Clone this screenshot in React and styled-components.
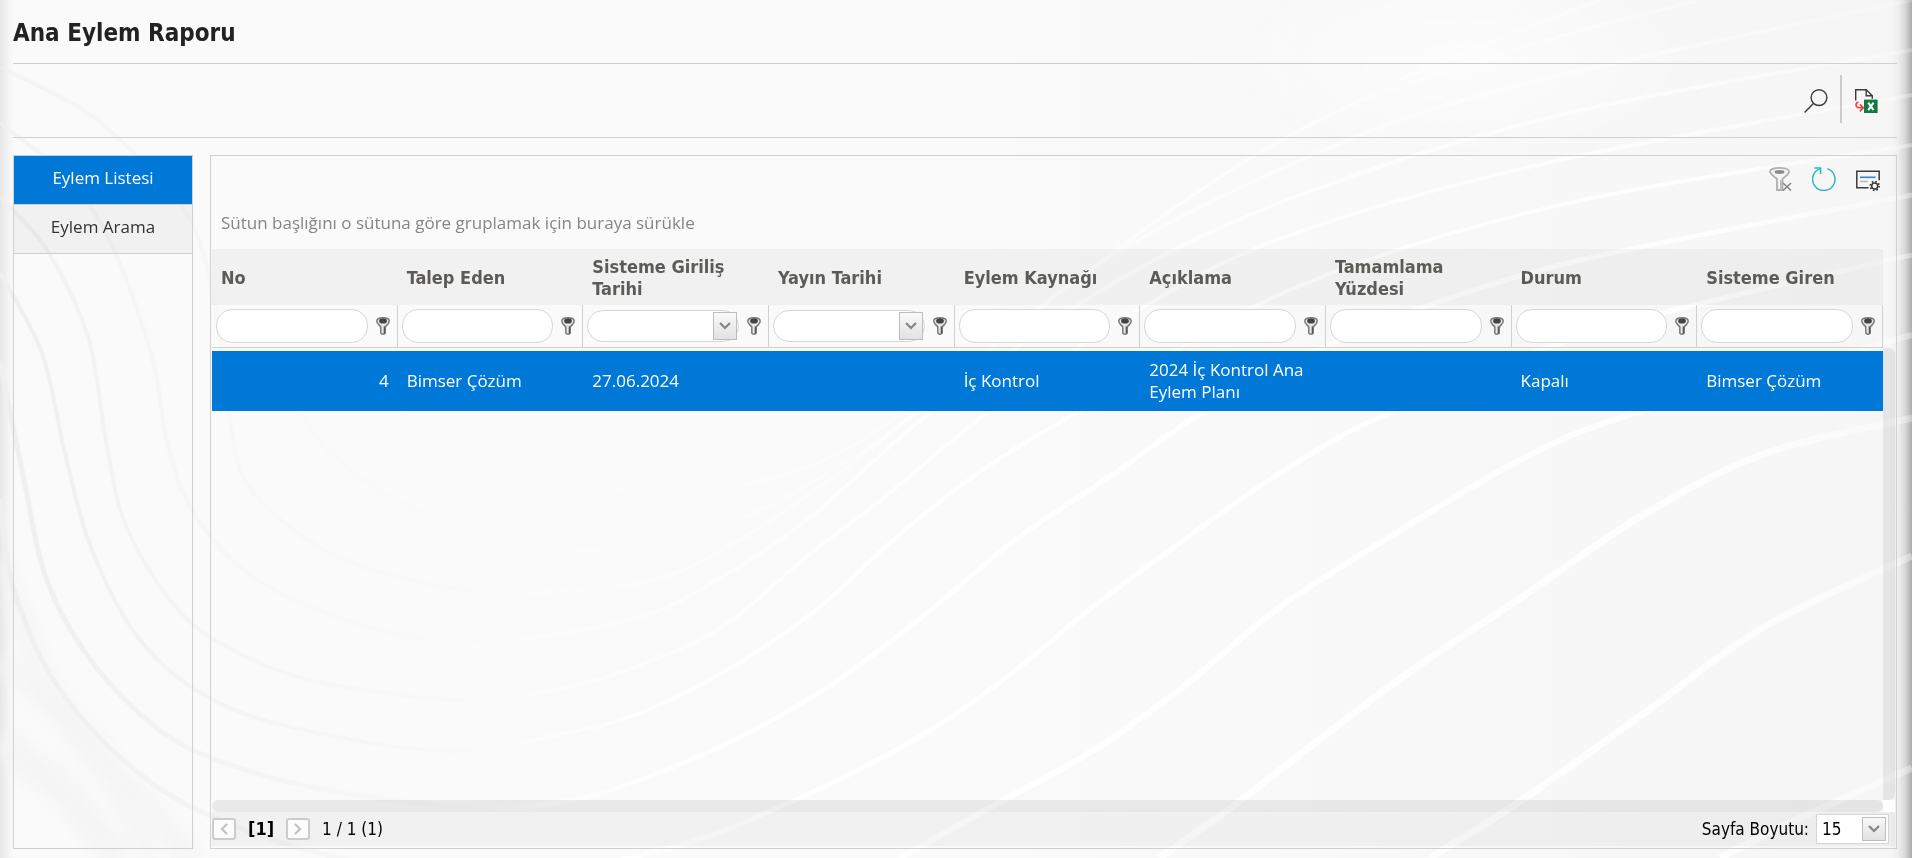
import React from 'react'
import styled, { createGlobalStyle } from 'styled-components';

const textFont = "'Open Sans', sans-serif";
const boldFont = "'DejaVu Sans Condensed', 'DejaVu Sans', sans-serif";
const blue = '#0078d7';
const line = '#d0d0d0';

const GlobalStyle = createGlobalStyle`
  * {
    box-sizing: border-box;
  }
  body {
    margin: 0;
    background:
      linear-gradient(to right, rgba(0, 0, 0, 0.08), rgba(0, 0, 0, 0.03) 7px, transparent 14px),
      linear-gradient(to left, rgba(0, 0, 0, 0.3), rgba(0, 0, 0, 0.12) 7px, rgba(0, 0, 0, 0.03) 14px, transparent 22px),
      linear-gradient(to right, #fafafa 50%, #f6f6f6);
    color: #000;
    font-family: ${textFont};
    font-size: 17px;
    line-height: 22px;
  }
  button, input, select {
    margin: 0;
    padding: 0;
    font: inherit;
    color: inherit;
  }
`;

const Backdrop = styled.svg`
  position: fixed;
  inset: 0;
  z-index: -1;
  width: 100%;
  height: 100%;
`;

const Page = styled.main`
  display: flex;
  flex-direction: column;
  min-height: 100vh;
  padding: 0 15px 9px 13px;
`;

const Title = styled.h1`
  margin: 0;
  padding: 19px 0 16px;
  border-bottom: 1px solid ${line};
  color: #222;
  font-family: ${boldFont};
  font-size: 24px;
  line-height: 28px;
`;

const Toolbar = styled.div`
  display: flex;
  align-items: center;
  justify-content: flex-end;
  gap: 12px;
  height: 74px;
  padding-right: 19px;
  border-bottom: 1px solid ${line};
`;

const Separator = styled.div`
  align-self: flex-start;
  width: 2px;
  height: 48px;
  margin-top: 11px;
  background: #ccc;
`;

const IconButton = styled.button`
  display: flex;
  border: 0;
  background: none;
  cursor: pointer;
`;

const Content = styled.div`
  display: flex;
  flex: 1;
  gap: 17px;
  padding-top: 17px;
`;

const Sidebar = styled.nav`
  width: 180px;
  border: 1px solid ${line};
`;

const Tab = styled.a`
  display: flex;
  align-items: center;
  justify-content: center;
  height: 49px;
  padding-bottom: 5px;
  border-bottom: 1px solid ${line};
  background: ${p => p.$active ? blue : 'rgba(0, 0, 0, 0.035)'};
  background-clip: padding-box;
  color: ${p => p.$active ? '#fff' : '#333'};
  text-decoration: none;
`;

const Panel = styled.section`
  display: flex;
  flex: 1;
  flex-direction: column;
  min-width: 0;
  padding: 0 1px 2px;
  border: 1px solid ${line};
`;

const GridTools = styled.div`
  display: flex;
  align-items: center;
  justify-content: flex-end;
  gap: 20px;
  height: 46px;
  padding-right: 15px;
`;

const GroupHint = styled.div`
  padding: 10px 9px 15px;
  color: #858585;
`;

const GridBody = styled.div`
  display: flex;
  flex: 1;
`;

const TableArea = styled.div`
  flex: 1;
`;

const Table = styled.table`
  width: 100%;
  border-collapse: separate;
  border-spacing: 0;
  table-layout: fixed;
`;

const HeadCell = styled.th`
  height: 56px;
  padding: 1px 9px 0;
  background: rgba(0, 0, 0, 0.035);
  color: #5c5b57;
  font-family: ${boldFont};
  font-size: 18px;
  text-align: left;
`;

const FilterCell = styled.td`
  height: 43px;
  padding: 0;
  border-right: 1px solid ${line};
  border-bottom: 1px solid ${line};
`;

const FilterBox = styled.div`
  display: flex;
  align-items: center;
  gap: 8px;
  padding: 0 7px 0 4px;
`;

const FilterInput = styled.input`
  flex: 1;
  width: 100%;
  min-width: 0;
  height: 34px;
  padding: 0 12px;
  border: 1px solid #d6d6d6;
  border-radius: 16px;
  background: #fff;
`;

const DateBox = styled.div`
  display: flex;
  flex: 1;
  align-items: center;
  min-width: 0;
  height: 32px;
  padding-right: 1px;
  border: 1px solid #d6d6d6;
  border-radius: 16px;
  background: #fff;
`;

const DateInput = styled.input`
  flex: 1;
  width: 100%;
  min-width: 0;
  padding-left: 12px;
  border: 0;
  background: none;
`;

const DropButton = styled.button`
  display: flex;
  align-items: center;
  justify-content: center;
  width: 24px;
  height: 28px;
  border: 1px solid #bdbdbd;
  background: linear-gradient(#f9f9f9, #e2e2e2);
`;

const Rows = styled.tbody`
  &::before {
    content: '';
    display: block;
    height: 3px;
  }
`;

const Cell = styled.td`
  height: 60px;
  padding: 0 9px;
  background: ${blue};
  color: #fff;
  text-align: ${p => p.$right ? 'right' : 'left'};
`;

const VerticalScroll = styled.div`
  width: 12px;
  margin-top: 99px;
  border-radius: 0 6px 6px 0;
  background: rgba(0, 0, 0, 0.065);
`;

const ScrollRow = styled.div`
  background: linear-gradient(#fff, #fff) right / 12px 100% no-repeat;
`;

const HorizontalScroll = styled.div`
  height: 12px;
  margin-right: 12px;
  border-radius: 6px;
  background: rgba(0, 0, 0, 0.065);
`;

const Pager = styled.footer`
  display: flex;
  align-items: center;
  gap: 12px;
  height: 34px;
  padding-right: 6px;
  background: rgba(0, 0, 0, 0.035);
  font-family: ${boldFont};
`;

const PageButton = styled.button`
  display: flex;
  align-items: center;
  justify-content: center;
  width: 24px;
  height: 22px;
  border: 2px solid #ccc;
  border-radius: 3px;
  background: #fcfcfc;
`;

const CurrentPage = styled.b`
  font-size: 18px;
`;

const SizeLabel = styled.label`
  display: flex;
  align-items: center;
  gap: 7px;
  margin-left: auto;
`;

const SizeBox = styled.span`
  display: grid;
  align-items: center;
  width: 73px;
  height: 30px;
  border: 1px solid #d6d6d6;
  background: #fff;

  > * {
    grid-area: 1 / 1;
  }
`;

const SizeSelect = styled.select`
  width: 100%;
  padding-left: 5px;
  border: 0;
  background: none;
  appearance: none;
`;

const SizeArrow = styled.span`
  display: flex;
  align-items: center;
  justify-content: center;
  justify-self: end;
  width: 24px;
  height: 24px;
  margin-right: 2px;
  border: 1px solid #bdbdbd;
  background: linear-gradient(#f9f9f9, #e2e2e2);
  pointer-events: none;
`;

// turns a list of points into a smooth curve through all of them
const curve = points => points.reduce((d, p, i) => {
  if (i === 0) return `M${p[0]} ${p[1]}`;
  const a = points[i - 2] || points[i - 1];
  const b = points[i - 1];
  const c = points[i + 1] || p;
  const x1 = b[0] + (p[0] - a[0]) / 6;
  const y1 = b[1] + (p[1] - a[1]) / 6;
  const x2 = p[0] - (c[0] - b[0]) / 6;
  const y2 = p[1] - (c[1] - b[1]) / 6;
  return `${d} C${x1} ${y1} ${x2} ${y2} ${p[0]} ${p[1]}`;
}, '');

const waves = [
  { w: 3, o: 0.4, points: [[400, 415], [490, 465], [600, 488], [722, 488], [824, 460], [900, 415], [1000, 340], [1200, 190], [1400, 80], [1600, 0]] },
  { w: 3, o: 0.4, points: [[302, 415], [326, 449], [388, 495], [490, 537], [570, 550], [640, 545], [742, 518], [844, 463], [909, 417], [1050, 300], [1280, 140], [1480, 60], [1700, 0]] },
  { w: 4, o: 0.5, points: [[0, 67], [83, 110], [140, 160], [193, 225], [217, 320], [229, 415], [245, 480], [294, 530], [367, 568], [490, 592], [640, 583], [722, 550], [811, 493], [920, 410], [1090, 270], [1290, 165], [1500, 90], [1912, 0]] },
  { w: 4, o: 0.7, points: [[0, 123], [70, 180], [114, 250], [152, 357], [167, 441], [192, 510], [245, 571], [318, 610], [408, 636], [510, 640], [640, 617], [722, 577], [803, 523], [864, 470], [934, 410], [1110, 285], [1300, 195], [1560, 115], [1912, 50]] },
  { w: 4, o: 0.8, points: [[0, 197], [47, 250], [88, 337], [106, 441], [126, 526], [175, 606], [229, 648], [318, 682], [469, 700], [571, 686], [640, 665], [722, 627], [811, 553], [885, 497], [987, 413], [1130, 315], [1290, 235], [1560, 160], [1912, 95]] },
  { w: 4, o: 1, points: [[0, 273], [42, 353], [65, 453], [90, 545], [135, 633], [196, 690], [286, 726], [449, 751], [571, 732], [640, 713], [722, 673], [816, 610], [901, 533], [987, 467], [1081, 410], [1290, 290], [1560, 205], [1912, 145]] },
  { w: 5, o: 1, points: [[0, 361], [24, 480], [45, 575], [82, 648], [139, 713], [204, 755], [326, 790], [480, 808], [571, 800], [640, 780], [734, 740], [828, 687], [922, 617], [1015, 540], [1109, 477], [1207, 410], [1340, 340], [1560, 265], [1912, 195]] },
  { w: 5, o: 1, points: [[0, 499], [12, 583], [53, 679], [122, 759], [204, 813], [330, 856], [500, 880], [680, 845], [779, 807], [844, 777], [926, 733], [1007, 677], [1089, 610], [1170, 550], [1280, 473], [1389, 413], [1600, 330], [1912, 255]] },
  { w: 6, o: 1, points: [[900, 858], [991, 807], [1089, 753], [1183, 687], [1280, 607], [1401, 530], [1522, 459], [1635, 413], [1912, 335]] },
  { w: 7, o: 1, points: [[1160, 858], [1232, 807], [1280, 770], [1401, 678], [1522, 597], [1643, 515], [1764, 454], [1912, 418]] },
  { w: 7, o: 1, points: [[1430, 858], [1522, 800], [1643, 714], [1764, 627], [1912, 556]] },
  { w: 7, o: 1, points: [[1720, 858], [1800, 818], [1912, 768]] },
];

const shades = [
  { w: 14, points: [[0, 560], [50, 690], [110, 780], [150, 858]] },
  { w: 18, points: [[0, 660], [70, 720], [140, 800], [190, 858]] },
  { w: 26, points: [[0, 740], [60, 790], [120, 858]] },
];

const Waves = () => (
  <Backdrop viewBox="0 0 1912 858" preserveAspectRatio="none" fill="none" aria-hidden="true">
    <defs>
      <linearGradient id="wave" gradientUnits="userSpaceOnUse" x1="0" y1="0" x2="1912" y2="0">
        <stop offset="0" stopColor="#efefef" />
        <stop offset="0.13" stopColor="#f5f5f5" />
        <stop offset="0.24" stopColor="#f8f8f8" />
        <stop offset="0.3" stopColor="#fff" stopOpacity="0.6" />
        <stop offset="0.45" stopColor="#fff" />
        <stop offset="0.9" stopColor="#fff" stopOpacity="0.8" />
        <stop offset="1" stopColor="#fff" stopOpacity="0.35" />
      </linearGradient>
      <radialGradient id="glow">
        <stop offset="0" stopColor="#fff" />
        <stop offset="1" stopColor="#fff" stopOpacity="0" />
      </radialGradient>
      <filter id="soft" x="-50%" y="-50%" width="200%" height="200%">
        <feGaussianBlur stdDeviation="8" />
      </filter>
    </defs>
    <ellipse cx="1460" cy="60" rx="260" ry="110" fill="url(#glow)" opacity="0.6" />
    {shades.map((s, i) => (
      <path key={i} d={curve(s.points)} stroke="#f4f4f4" strokeWidth={s.w} filter="url(#soft)" />
    ))}
    {waves.map((wave, i) => (
      <path key={i} d={curve(wave.points)} stroke="url(#wave)" strokeWidth={wave.w} opacity={wave.o} />
    ))}
  </Backdrop>
)

const SearchIcon = () => (
  <svg width="24" height="24" viewBox="0 0 24 24" fill="none" stroke="#3b3b3b" strokeWidth="1.4">
    <circle cx="15" cy="8.6" r="7.9" />
    <path d="M9.4 14.4L0.6 23.4" />
  </svg>
)

const ExcelIcon = () => (
  <svg width="24" height="24" viewBox="0 0 24 24" fill="none">
    <path d="M1.7 11.5V0.8h10.6l6 6v3" stroke="#3b3b3b" strokeWidth="1.4" />
    <path d="M12.2 1v5.8h6" stroke="#3b3b3b" strokeWidth="1.4" />
    <path d="M4.4 13c-3.400 1.200-3.200 5.600 0.800 5.800h3.600M5.800 15.400l3.600 3.400-3.600 3.600" stroke="#ee4040" strokeWidth="1.6" />
    <rect x="10" y="10.600" width="13.600" height="13.400" fill="#107c41" />
    <path d="M14.200 13.600l5.400 7.600M19.600 13.600l-5.400 7.600" stroke="#fff" strokeWidth="2" />
  </svg>
)

const ClearFilterIcon = () => (
  <svg width="24" height="24" viewBox="0 0 24 24" fill="none">
    <path d="M2 4.500C2-0.300 21-0.300 21 4.500c0 2.500-2.500 4-6.500 7.500v11H9V12C5 8.500 2 7 2 4.500z" fill="#f4f4f4" stroke="#b0b0b0" strokeWidth="1.800" />
    <ellipse cx="11.500" cy="5" rx="5" ry="1.900" fill="#8a8a8a" />
    <path d="M12.800 13v9.500" stroke="#b8b8b8" strokeWidth="1.600" />
    <path d="M15 16l8 7.500M23 16l-8 7.500" stroke="#858585" strokeWidth="1.600" />
  </svg>
)

const RefreshIcon = () => (
  <svg width="24" height="24" viewBox="0 0 24 24" fill="none" stroke="#2bb5cd" strokeWidth="1.5">
    <path d="M15.200 1.600A11.200 11.200 0 1 1 8.400 1.600" />
    <path d="M2.400 1h6.200v6" />
  </svg>
)

const LayoutIcon = () => (
  <svg width="24" height="24" viewBox="0 0 24 24" fill="none">
    <path d="M12.500 20.800H0.800V4.200h22.400v9" stroke="#3b3b3b" strokeWidth="1.500" />
    <path d="M4 10.300h15.600" stroke="#2b88d8" strokeWidth="1.600" />
    <path d="M4 14.500h7.600" stroke="#b5b5b5" strokeWidth="1.500" />
    <circle cx="18.700" cy="18.900" r="3" stroke="#3b3b3b" strokeWidth="1.500" />
    <circle cx="18.700" cy="18.900" r="4.400" stroke="#3b3b3b" strokeWidth="1.800" strokeDasharray="1.600 1.856" />
  </svg>
)

const FilterIcon = () => (
  <svg width="14" height="18" viewBox="0 0 14 18" fill="none">
    <path d="M0.800 4.200C0.800-0.400 13.200-0.400 13.200 4.200c0 2.600-2.400 3.600-4 5.800v6.200c-0.800 1.400-3.600 1.400-4.400 0V10C3.200 7.800 0.800 6.800 0.800 4.200z" fill="#e6e6e6" stroke="#7a7a7a" strokeWidth="1.500" />
    <ellipse cx="7" cy="3.900" rx="3.900" ry="2.600" fill="#444" />
    <path d="M8.400 9.500v7" stroke="#555" strokeWidth="1.400" />
  </svg>
)

const ChevronDown = () => (
  <svg width="12" height="8" viewBox="0 0 12 8" fill="none" stroke="#858585" strokeWidth="2.200">
    <path d="M1 1l5 5 5-5" />
  </svg>
)

const Chevron = ({ d }) => (
  <svg width="10" height="12" viewBox="0 0 10 12" fill="none" stroke="#c2c2c2" strokeWidth="2.200">
    <path d={d} />
  </svg>
)

const columns = [
  { title: 'No', value: '4', right: true },
  { title: 'Talep Eden', value: 'Bimser Çözüm' },
  { title: 'Sisteme Giriliş Tarihi', value: '27.06.2024', date: true },
  { title: 'Yayın Tarihi', value: '', date: true },
  { title: 'Eylem Kaynağı', value: 'İç Kontrol' },
  { title: 'Açıklama', value: '2024 İç Kontrol Ana Eylem Planı' },
  { title: 'Tamamlama Yüzdesi', value: '' },
  { title: 'Durum', value: 'Kapalı' },
  { title: 'Sisteme Giren', value: 'Bimser Çözüm' },
];

const Filter = ({ column }) => (
  <FilterBox>
    {column.date ? (
      <DateBox>
        <DateInput type="text" aria-label={column.title} />
        <DropButton aria-label={column.title}><ChevronDown /></DropButton>
      </DateBox>
    ) : (
      <FilterInput type="text" aria-label={column.title} />
    )}
    <IconButton aria-label={column.title}><FilterIcon /></IconButton>
  </FilterBox>
)

const App = () => {
  return (
    <>
      <GlobalStyle />
      <Waves />
      <Page>
        <Title>Ana Eylem Raporu</Title>
        <Toolbar>
          <IconButton aria-label="Ara"><SearchIcon /></IconButton>
          <Separator />
          <IconButton aria-label="Excel"><ExcelIcon /></IconButton>
        </Toolbar>
        <Content>
          <Sidebar>
            <Tab href="#liste" $active>Eylem Listesi</Tab>
            <Tab href="#arama">Eylem Arama</Tab>
          </Sidebar>
          <Panel>
            <GridTools>
              <IconButton aria-label="Filtreyi temizle"><ClearFilterIcon /></IconButton>
              <IconButton aria-label="Yenile"><RefreshIcon /></IconButton>
              <IconButton aria-label="Ayarlar"><LayoutIcon /></IconButton>
            </GridTools>
            <GroupHint>Sütun başlığını o sütuna göre gruplamak için buraya sürükle</GroupHint>
            <GridBody>
              <TableArea>
                <Table>
                  <thead>
                    <tr>
                      {columns.map(c => <HeadCell key={c.title}>{c.title}</HeadCell>)}
                    </tr>
                    <tr>
                      {columns.map(c => <FilterCell key={c.title}><Filter column={c} /></FilterCell>)}
                    </tr>
                  </thead>
                  <Rows>
                    <tr>
                      {columns.map(c => <Cell key={c.title} $right={c.right}>{c.value}</Cell>)}
                    </tr>
                  </Rows>
                </Table>
              </TableArea>
              <VerticalScroll />
            </GridBody>
            <ScrollRow>
              <HorizontalScroll />
            </ScrollRow>
            <Pager>
              <PageButton aria-label="Önceki"><Chevron d="M8 1L3 6l5 5" /></PageButton>
              <CurrentPage>[1]</CurrentPage>
              <PageButton aria-label="Sonraki"><Chevron d="M2 1l5 5-5 5" /></PageButton>
              <span>1 / 1 (1)</span>
              <SizeLabel>
                Sayfa Boyutu:
                <SizeBox>
                  <SizeSelect defaultValue="15">
                    <option>15</option>
                  </SizeSelect>
                  <SizeArrow><ChevronDown /></SizeArrow>
                </SizeBox>
              </SizeLabel>
            </Pager>
          </Panel>
        </Content>
      </Page>
    </>
  )
}

export default App
